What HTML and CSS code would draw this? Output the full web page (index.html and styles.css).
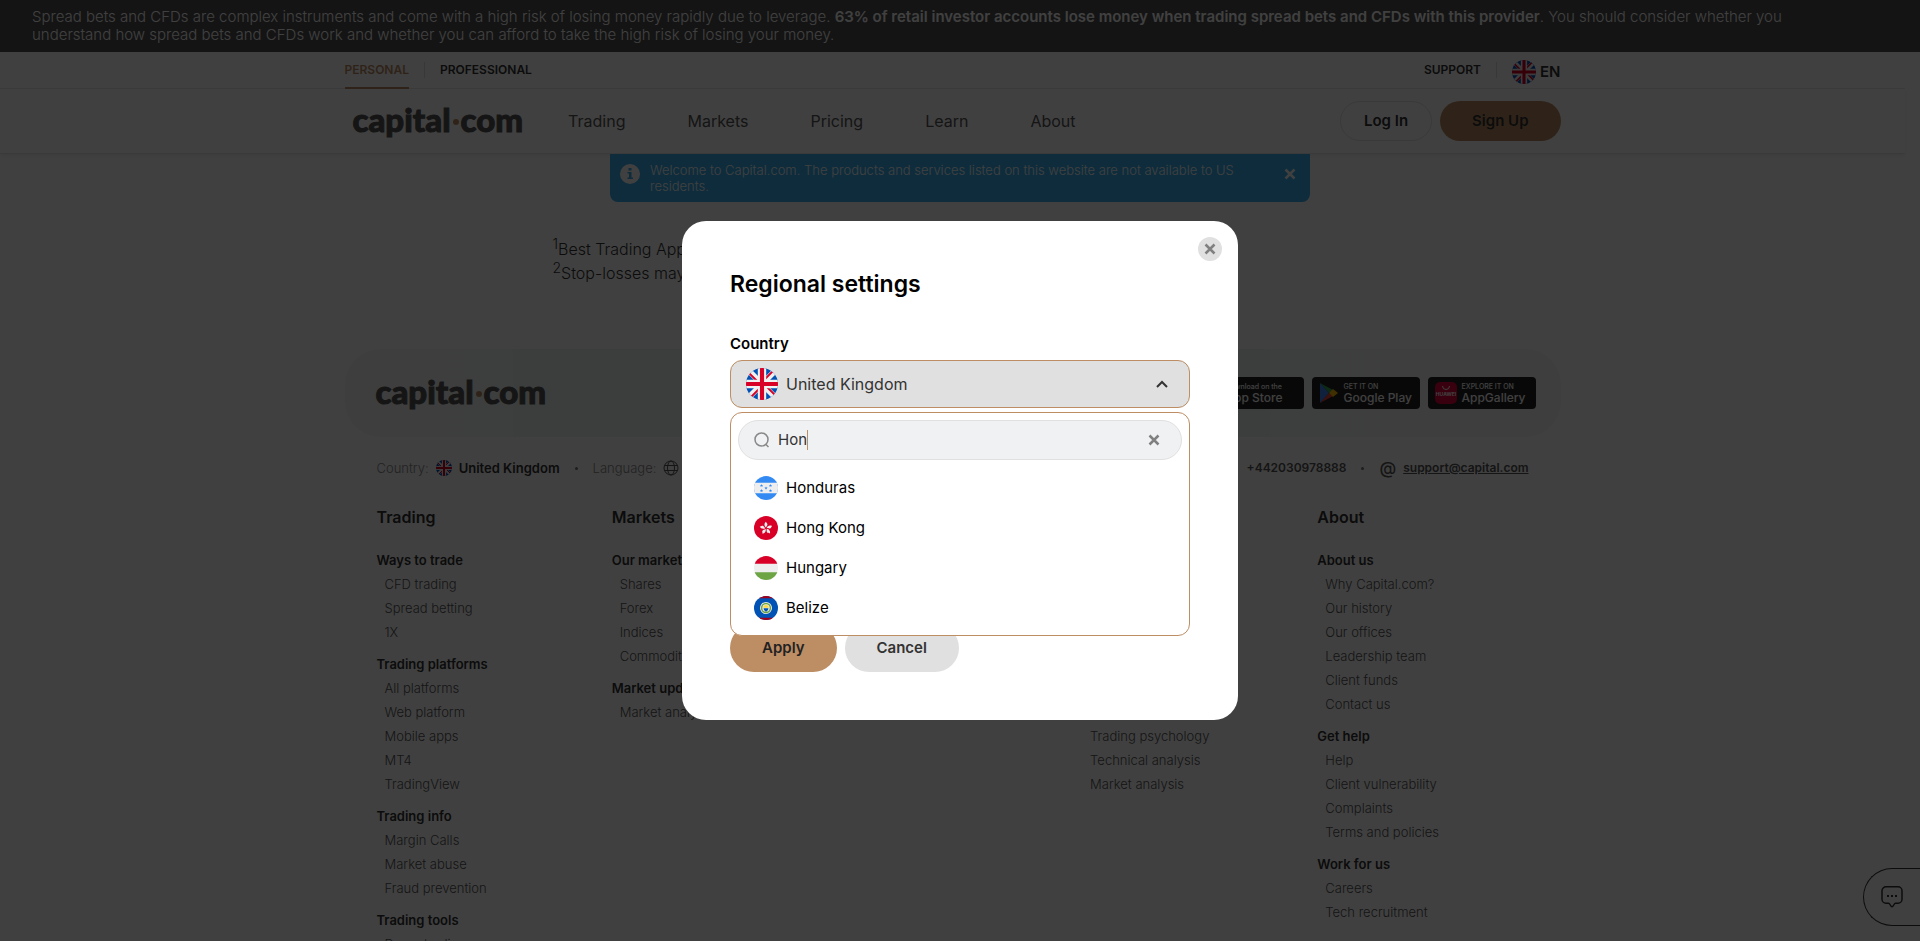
FILE: index.html
```html
<!DOCTYPE html>
<html lang="en">
<head>
<meta charset="utf-8">
<title>Capital.com – Regional settings</title>
<meta name="viewport" content="width=device-width, initial-scale=1">
<link rel="stylesheet" href="styles.css">
</head>
<body>
<svg class="sprite" aria-hidden="true">
  <defs>
    <clipPath id="round"><circle cx="256" cy="256" r="256"/></clipPath>
    <symbol id="flag-uk" viewBox="0 0 512 512">
      <g clip-path="url(#round)">
        <path fill="#0052b4" d="M0 0h512v512H0z"/>
        <path stroke="#f0f0f0" stroke-width="92" d="M0 0l512 512M512 0L0 512"/>
        <path stroke="#d80027" stroke-width="32" d="M50 82l150 150M462 430L312 280M430 50L280 200M82 462l150-150"/>
        <path fill="#f0f0f0" d="M189 0h134v189h189v134H323v189H189V323H0V189h189z"/>
        <path fill="#d80027" d="M223 0h66v223h223v66H289v223h-66V289H0v-66h223z"/>
      </g>
    </symbol>
    <symbol id="flag-hn" viewBox="0 0 512 512">
      <g clip-path="url(#round)">
        <path fill="#338af3" d="M0 0h512v512H0z"/>
        <path fill="#eee" d="M0 144h512v224H0z"/>
        <g fill="#338af3">
          <path id="star" d="M256 222l9 24h27l-21 17 8 26-23-15-23 15 8-26-21-17h27z"/>
          <use href="#star" x="-96" y="-54"/><use href="#star" x="96" y="-54"/>
          <use href="#star" x="-96" y="54"/><use href="#star" x="96" y="54"/>
        </g>
      </g>
    </symbol>
    <symbol id="flag-hk" viewBox="0 0 512 512">
      <circle cx="256" cy="256" r="256" fill="#d80027"/>
      <g fill="#f0f0f0">
        <path id="petal" d="M252 246c-34-30-42-84-2-122 4 18 36 24 36 58 0 24-20 36-34 64z"/>
        <use href="#petal" transform="rotate(72 256 262)"/>
        <use href="#petal" transform="rotate(144 256 262)"/>
        <use href="#petal" transform="rotate(216 256 262)"/>
        <use href="#petal" transform="rotate(288 256 262)"/>
      </g>
    </symbol>
    <symbol id="flag-hu" viewBox="0 0 512 512">
      <g clip-path="url(#round)">
        <path fill="#eee" d="M0 0h512v512H0z"/>
        <path fill="#d80027" d="M0 0h512v167H0z"/>
        <path fill="#6da544" d="M0 345h512v167H0z"/>
      </g>
    </symbol>
    <symbol id="flag-bz" viewBox="0 0 512 512">
      <g clip-path="url(#round)">
        <path fill="#0052b4" d="M0 0h512v512H0z"/>
        <path fill="#a2001d" d="M0 0h512v48H0zM0 464h512v48H0z"/>
        <circle cx="256" cy="256" r="128" fill="#f0f0f0"/>
        <circle cx="256" cy="256" r="94" fill="none" stroke="#6da544" stroke-width="32"/>
        <path fill="#ffda44" d="M196 252a60 60 0 0 1 120 0z"/>
        <path fill="#0052b4" d="M204 262h104c0 34-22 60-52 72-30-12-52-38-52-72z"/>
      </g>
    </symbol>
    <symbol id="cross" viewBox="0 0 12 12"><path fill="none" stroke="currentColor" stroke-width="2.500" d="M1.500 1.500l9 9M10.500 1.500l-9 9"/></symbol>
  </defs>
</svg>

<div class="risk">Spread bets and CFDs are complex instruments and come with a high risk of losing money rapidly due to leverage. <strong>63% of retail investor accounts lose money when trading spread bets and CFDs with this provider</strong>. You should consider whether you<br>understand how spread bets and CFDs work and whether you can afford to take the high risk of losing your money.</div>

<div class="site">
  <header>
    <div class="topbar">
      <div class="container topbar-row">
        <a class="tab tab-active" href="#">PERSONAL</a>
        <span class="rule"></span>
        <a class="tab" href="#">PROFESSIONAL</a>
        <a class="tab push" href="#">SUPPORT</a>
        <span class="rule"></span>
        <button class="lang" type="button"><svg class="icon-24"><use href="#flag-uk"/></svg>EN</button>
      </div>
    </div>
    <div class="mainbar">
      <div class="container mainbar-row">
        <a class="logo" href="#">capital<i class="logo-dot"></i>com</a>
        <nav class="nav">
          <a href="#">Trading</a><a href="#">Markets</a><a href="#">Pricing</a><a href="#">Learn</a><a href="#">About</a>
        </nav>
        <div class="auth">
          <button class="btn-login" type="button">Log In</button>
          <button class="btn-signup" type="button">Sign Up</button>
        </div>
      </div>
    </div>
  </header>

  <div class="footnotes">
    <p><sup>1</sup>Best Trading App</p>
    <p><sup>2</sup>Stop-losses may</p>
  </div>

  <footer class="container">
    <div class="brandbar">
      <a class="logo" href="#">capital<i class="logo-dot"></i>com</a>
      <div class="stores">
        <a class="store" href="#">
          <svg width="18" height="22" viewBox="0 0 18 22" fill="#fff"><path d="M12 1c0 2-2 4-4 4 0-2 2-4 4-4zM9 6c1 0 2-1 4-1 1 0 3 1 4 2-3 2-3 6 1 8-1 3-3 6-5 6-1 0-2-1-4-1s-2 1-4 1C3 21 0 16 0 12c0-4 2-7 5-7 2 0 3 1 4 1z"/></svg>
          <span class="store-text"><small>Download on the</small>App Store</span>
        </a>
        <a class="store" href="#">
          <svg width="20" height="22" viewBox="0 0 20 22"><path fill="#4285f4" d="M1 1v20l9-10z"/><path fill="#34a853" d="M1 1l13 7-4 3z"/><path fill="#ea4335" d="M1 21l13-7-4-3z"/><path fill="#fbbc04" d="M14 7l5 4-5 4-4-4z"/></svg>
          <span class="store-text"><small>GET IT ON</small>Google Play</span>
        </a>
        <a class="store" href="#">
          <svg width="22" height="22" viewBox="0 0 22 22"><rect width="22" height="22" rx="5" fill="#e3003c"/><path d="M7.500 4a3.500 3.500 0 0 0 7 0" fill="none" stroke="#fff"/><text x="11" y="14" text-anchor="middle" class="huawei">HUAWEI</text></svg>
          <span class="store-text"><small>EXPLORE IT ON</small>AppGallery</span>
        </a>
      </div>
    </div>

    <div class="contact">
      <span class="muted">Country:</span>
      <svg class="icon-16"><use href="#flag-uk"/></svg>
      <strong>United Kingdom</strong>
      <span class="bullet"></span>
      <span class="muted">Language:</span>
      <svg class="icon-16" viewBox="0 0 16 16" fill="none" stroke="#555"><circle cx="8" cy="8" r="7"/><path d="M1.500 5.500h13M1.500 10.500h13"/><ellipse cx="8" cy="8" rx="3.500" ry="7"/></svg>
      <strong>English</strong>
      <a class="phone push" href="#">+442030978888</a>
      <span class="bullet"></span>
      <span class="at">@</span>
      <a class="mail" href="#">support@capital.com</a>
    </div>

    <div class="columns">
      <section>
        <h2>Trading</h2>
        <h3>Ways to trade</h3>
        <ul><li><a href="#">CFD trading</a></li><li><a href="#">Spread betting</a></li><li><a href="#">1X</a></li></ul>
        <h3>Trading platforms</h3>
        <ul><li><a href="#">All platforms</a></li><li><a href="#">Web platform</a></li><li><a href="#">Mobile apps</a></li><li><a href="#">MT4</a></li><li><a href="#">TradingView</a></li></ul>
        <h3>Trading info</h3>
        <ul><li><a href="#">Margin Calls</a></li><li><a href="#">Market abuse</a></li><li><a href="#">Fraud prevention</a></li></ul>
        <h3>Trading tools</h3>
        <ul><li><a href="#">Demo trading</a></li></ul>
      </section>
      <section>
        <h2>Markets</h2>
        <h3>Our markets</h3>
        <ul><li><a href="#">Shares</a></li><li><a href="#">Forex</a></li><li><a href="#">Indices</a></li><li><a href="#">Commodities</a></li></ul>
        <h3>Market updates</h3>
        <ul><li><a href="#">Market analysis</a></li></ul>
      </section>
      <section>
        <h2>Pricing</h2>
        <h3>Our fees</h3>
        <ul><li><a href="#">Charges and fees</a></li></ul>
      </section>
      <section>
        <h2>Learn</h2>
        <h3>Learn to trade</h3>
        <ul><li><a href="#">Courses</a></li><li><a href="#">Glossary</a></li></ul>
        <h3>Guides</h3>
        <ul><li><a href="#">Market guides</a></li><li><a href="#">Trading guides</a></li><li><a href="#">Strategies</a></li><li><a href="#">Trading psychology</a></li><li><a href="#">Technical analysis</a></li><li><a href="#">Market analysis</a></li></ul>
      </section>
      <section>
        <h2>About</h2>
        <h3>About us</h3>
        <ul><li><a href="#">Why Capital.com?</a></li><li><a href="#">Our history</a></li><li><a href="#">Our offices</a></li><li><a href="#">Leadership team</a></li><li><a href="#">Client funds</a></li><li><a href="#">Contact us</a></li></ul>
        <h3>Get help</h3>
        <ul><li><a href="#">Help</a></li><li><a href="#">Client vulnerability</a></li><li><a href="#">Complaints</a></li><li><a href="#">Terms and policies</a></li></ul>
        <h3>Work for us</h3>
        <ul><li><a href="#">Careers</a></li><li><a href="#">Tech recruitment</a></li></ul>
      </section>
    </div>
  </footer>
</div>

<div class="notice">
  <svg width="20" height="20" viewBox="0 0 20 20"><circle cx="10" cy="10" r="10" fill="#fff"/><path fill="#38b0f0" d="M8.500 4h3v2.500h-3zM7.500 8h4v5.500H13V15H7.500v-1.500H9v-4H7.500z"/></svg>
  <p>Welcome to Capital.com. The products and services listed on this website are not available to US residents.</p>
  <button class="plain" type="button" aria-label="Close notice"><svg width="12" height="12"><use href="#cross"/></svg></button>
</div>

<button class="chat" type="button" aria-label="Open chat">
  <svg width="24" height="24" viewBox="0 0 24 24" fill="none" stroke="currentColor" stroke-width="1.500"><path d="M6 1.800h12a4 4 0 0 1 4 4v8.400a4 4 0 0 1-4 4h-2.500c-1.500 0-2 3.600-3.500 3.600s-2-3.600-3.500-3.600H6a4 4 0 0 1-4-4V5.800a4 4 0 0 1 4-4z"/><path stroke-width="2" d="M7 11h2M11 11h2M15 11h2"/></svg>
</button>

<div class="overlay">
  <form class="modal" role="dialog" aria-labelledby="modal-title">
    <button class="modal-close" type="button" aria-label="Close"><svg width="12" height="12"><use href="#cross"/></svg></button>
    <h1 id="modal-title">Regional settings</h1>
    <div class="field">
      <label for="country">Country</label>
      <div class="select-wrap">
        <select id="country"><option>United Kingdom</option></select>
        <svg class="select-flag"><use href="#flag-uk"/></svg>
        <svg class="select-arrow" viewBox="0 0 12 8"><path fill="none" stroke="#333" stroke-width="2" d="M1 7l5-5 5 5"/></svg>
        <div class="dropdown">
          <div class="search">
            <svg width="16" height="16" viewBox="0 0 16 16" fill="none" stroke="#888" stroke-width="1.500"><circle cx="7.500" cy="7.500" r="6.500"/><path d="M12 12.500l2.500 2.500"/></svg>
            <span class="search-text"><input type="text" value="Hon" aria-label="Search country"><i class="caret"></i></span>
            <button class="plain clear" type="button" aria-label="Clear"><svg width="12" height="12"><use href="#cross"/></svg></button>
          </div>
          <ul class="options">
            <li><svg class="icon-24"><use href="#flag-hn"/></svg>Honduras</li>
            <li><svg class="icon-24"><use href="#flag-hk"/></svg>Hong Kong</li>
            <li><svg class="icon-24"><use href="#flag-hu"/></svg>Hungary</li>
            <li><svg class="icon-24"><use href="#flag-bz"/></svg>Belize</li>
          </ul>
        </div>
      </div>
    </div>
    <div class="actions">
      <button class="apply" type="submit">Apply</button>
      <button class="cancel" type="button">Cancel</button>
    </div>
  </form>
</div>
</body>
</html>
```

FILE: styles.css
```css
* { box-sizing: border-box; }
body {
  margin: 0;
  height: 100vh;
  overflow: hidden;
  background: #fff;
  color: #333;
  font: 300 16px/24px Inter, "Liberation Sans", sans-serif;
}
h1, h2, h3, p, ul { margin: 0; padding: 0; }
ul { list-style: none; }
a { color: inherit; text-decoration: none; }
svg { display: block; flex: none; }
button { font: inherit; color: inherit; padding: 0; border: 0; background: none; cursor: pointer; }
.sprite { position: absolute; width: 0; height: 0; }
.icon-16 { width: 16px; height: 16px; }
.icon-24 { width: 24px; height: 24px; }
.push { margin-left: auto; }

.risk { padding: 8px 32px; background: #505050; color: #fff; font-size: 15px; line-height: 18px; }
.risk strong { font-weight: 600; }

/* right padding stands in for the scrollbar while the dialog is open */
.site { padding-right: 15px; }
.container { max-width: 1216px; margin: 0 auto; }

.topbar { border-bottom: 1px solid #e8e8e8; }
.topbar-row { display: flex; align-items: center; height: 36px; }
.tab { height: 37px; line-height: 35px; font-size: 12px; font-weight: 600; }
.tab-active { color: #bd8d63; border-bottom: 2px solid #bd8d63; }
.rule { width: 1px; height: 16px; margin: 0 15px; background: #e0e0e0; }
.lang { display: flex; align-items: center; gap: 4px; padding-top: 4px; font-weight: 600; font-size: 15px; }

.mainbar { border-bottom: 1px solid #e8e8e8; box-shadow: 0 2px 4px rgba(0, 0, 0, .06); }
.mainbar-row { display: flex; align-items: center; padding: 12px 0 12px 8px; }
.logo { display: flex; align-items: center; padding-bottom: 4px; font: 900 33px/36px Lato, sans-serif; color: #555; -webkit-text-stroke: 1px #555; }
.logo-dot { width: 6px; height: 6px; margin: 5px 2px 0; border-radius: 3px; background: #bd8d63; }
.nav { display: flex; gap: 62px; margin-left: 45px; font-weight: 400; color: #555; }
.auth { display: flex; gap: 8px; margin-left: auto; font-weight: 600; font-size: 15px; }
.btn-login { height: 40px; padding: 0 23px; border: 1px solid #e4e4e4; border-radius: 20px; }
.btn-signup { height: 40px; padding: 0 32px; border-radius: 20px; background: #bd8d63; }

.notice {
  position: absolute;
  top: 154px;
  left: 50%;
  width: 700px;
  margin-left: -350px;
  display: flex;
  align-items: flex-start;
  gap: 10px;
  padding: 8px 14px 8px 10px;
  border-radius: 0 0 8px 8px;
  background: #38b0f0;
  color: #fff;
  font-size: 13px;
  line-height: 16px;
}
.notice > svg { margin-top: 2px; }
.notice p { flex: 1; padding-right: 40px; }
.notice .plain { padding: 6px 0; }

.footnotes { max-width: 800px; margin: 0 auto; padding-top: 83px; height: 195px; font-weight: 300; }
.footnotes sup { line-height: 0; font-size: 14px; }

.brandbar {
  display: flex;
  align-items: center;
  justify-content: space-between;
  height: 88px;
  padding: 0 25px 0 31px;
  border-radius: 36px;
  background: linear-gradient(90deg, #f6f6f6, #f4f6f6 13%, #f0f6f4 14%, #f0f6f4 76%, #f4f6f6 77%, #f6f6f6);
}
.stores { display: flex; gap: 8px; }
.store { display: flex; align-items: center; gap: 5px; width: 108px; height: 32px; padding-left: 7px; border-radius: 4px; background: #222; color: #fff; }
.store-text { display: block; white-space: nowrap; font-weight: 500; font-size: 12px; line-height: 14px; }
.store small { display: block; font-size: 7px; line-height: 9px; }
.huawei { font: 700 5px Inter, sans-serif; fill: #fff; }

.contact { display: flex; align-items: center; gap: 7px; padding: 19px 32px 0; font-size: 13px; }
.muted { color: #888; }
.contact strong, .phone, .mail { font-weight: 600; }
.phone, .mail, .at { color: #555; }
.phone, .mail { font-size: 12px; }
.mail { text-decoration: underline; }
.at { font-size: 17px; font-weight: 500; }
.bullet { width: 3px; height: 3px; margin: 0 8px; border-radius: 2px; background: #777; }

.columns { display: grid; grid-template-columns: repeat(5, 1fr); gap: 24px; padding: 25px 32px; }
.columns h2 { margin-bottom: 19px; font-size: 16px; line-height: 24px; font-weight: 600; }
.columns h3 { font-size: 13px; line-height: 24px; font-weight: 600; }
.columns ul { margin-bottom: 8px; padding-left: 8px; font-size: 13px; color: #555; }

.chat {
  position: fixed;
  right: 0;
  bottom: 15px;
  display: flex;
  align-items: center;
  width: 57px;
  height: 58px;
  padding-left: 16px;
  border: 1px solid #333;
  border-right: 0;
  border-radius: 29px 0 0 29px;
}

.overlay { position: fixed; inset: 0; display: flex; align-items: center; justify-content: center; background: rgba(0, 0, 0, .75); }
.modal { position: relative; width: 556px; padding: 48px; border-radius: 24px; background: #fff; color: #000; }
.modal-close { position: absolute; top: 16px; right: 16px; display: flex; align-items: center; justify-content: center; width: 24px; height: 24px; border-radius: 12px; background: #e0e0e0; color: #808080; }
.modal h1 { margin-bottom: 33px; font-size: 23px; line-height: 30px; font-weight: 600; }
.field label { display: block; margin-bottom: 4px; font-size: 15px; font-weight: 600; }
.select-wrap { position: relative; }
.select-wrap select { display: block; width: 100%; height: 48px; padding: 0 55px; border: 1px solid #bd8d63; border-radius: 12px; background: #e0e0e0; color: #333; font: 400 16px/24px Inter, sans-serif; appearance: none; }
.select-flag { position: absolute; left: 16px; top: 8px; width: 32px; height: 32px; pointer-events: none; }
.select-arrow { position: absolute; right: 22px; top: 20px; width: 12px; height: 8px; pointer-events: none; }
.dropdown { position: absolute; z-index: 1; top: 52px; left: 0; right: 0; padding: 7px; border: 1px solid #bd8d63; border-radius: 12px; background: #fff; }
.search { display: flex; align-items: center; gap: 8px; height: 40px; padding: 0 21px 0 15px; border: 1px solid #e0e0e0; border-radius: 20px; background: #f0f1f3; }
.search-text { display: flex; flex: 1; align-items: center; }
.search input { field-sizing: content; min-width: 8px; padding: 0; border: 0; outline: 0; background: none; color: #333; font: 400 15px/24px Inter, sans-serif; }
.caret { width: 1px; height: 20px; background: #bd8d63; }
.clear { color: #808080; }
.options { padding-top: 8px; font-weight: 400; }
.options li { display: flex; align-items: center; gap: 8px; height: 40px; padding-left: 16px; font-size: 15px; }
.actions { display: flex; gap: 8px; margin-top: 216px; font-weight: 600; font-size: 15px; }
.apply { height: 48px; padding: 0 32px; border-radius: 24px; background: #bd8d63; color: #222; }
.cancel { height: 48px; padding: 0 32px; border-radius: 24px; background: #e0e0e0; color: #333; }
```
